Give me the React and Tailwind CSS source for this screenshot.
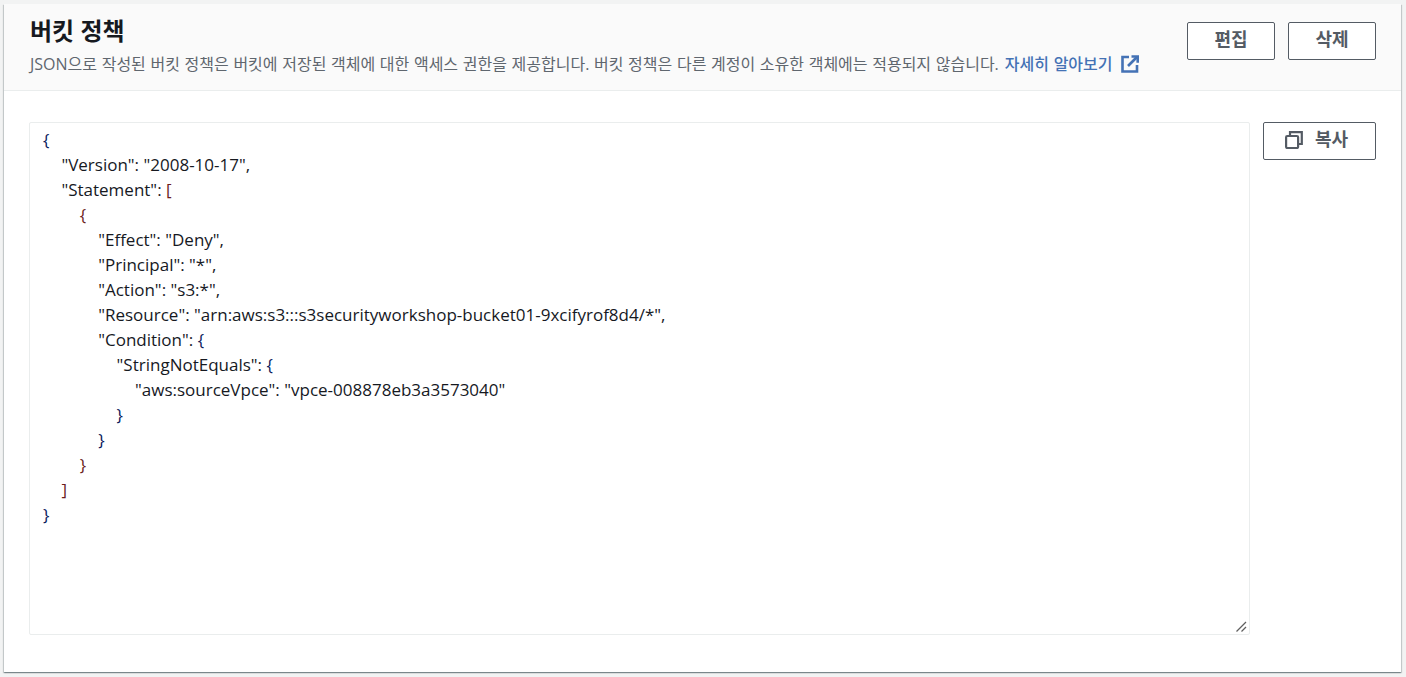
// App.jsx
import React from 'react';

const NAVY = 'text-[#0a1a5c]';
const MAROON = 'text-[#6b1d1d]';

const Line = ({ indent = 0, children }) => (
  <div className="h-[25px] whitespace-pre" style={{ paddingLeft: indent * 18.4 }}>
    {children}
  </div>
);

const Button = ({ className = '', children }) => (
  <button
    type="button"
    className={`h-[38px] flex items-center justify-center rounded-[2px] border border-[#545b64] bg-white text-[#545b64] text-[18px] font-bold pb-[3px] ${className}`}
  >
    {children}
  </button>
);

const App = () => {
  return (
    <div className="h-[677px] bg-[#f2f3f3] pt-1 pl-1 pr-[5px] pb-[5px] font-['Open_Sans','Noto_Sans_CJK_KR',sans-serif] overflow-hidden">
      <div className="h-full bg-white flex flex-col shadow-[0_1px_1px_0_rgba(0,28,36,0.3),1px_1px_1px_0_rgba(0,28,36,0.15),-1px_1px_1px_0_rgba(0,28,36,0.15)]">
        <div className="h-[87px] bg-[#fafafa] border-b border-[#eaeded] flex justify-between pl-[26px] pr-[25px]">
          <div>
            <h2 className="mt-[11px] text-[24px] leading-[32px] font-bold text-[#16191f]">버킷 정책</h2>
            <p className="mt-[7px] flex items-center text-[16px] leading-[20px] text-[#5f666e] whitespace-nowrap [word-spacing:0.5px]">
              JSON으로 작성된 버킷 정책은 버킷에 저장된 객체에 대한 액세스 권한을 제공합니다. 버킷 정책은 다른 계정이 소유한 객체에는 적용되지 않습니다.
              <a href="#" className="ml-[6px] font-medium text-[#4472b5] flex items-center">
                자세히 알아보기
                <svg className="ml-[8px] w-[18px] h-[18px]" viewBox="0 0 18 18" fill="none" stroke="#4472b5" strokeWidth="2.6">
                  <path d="M8 2H1.5v14.5H16V10" />
                  <path d="M7 11 16 2" />
                  <path d="M10.5 1.5h6.2v6.2" />
                </svg>
              </a>
            </p>
          </div>
          <div className="flex gap-[13px] pt-[18px]">
            <Button className="w-[88px]">편집</Button>
            <Button className="w-[88px]">삭제</Button>
          </div>
        </div>
        <div className="flex-1 flex items-start pt-[31px] pl-[25px] pr-[25px] gap-[13px]">
          <div className="relative w-[1221px] h-[513px] shrink-0 overflow-auto rounded-[2px] border border-[#eaeded] pl-[13px] pt-[4px] text-[17px] leading-[25px] text-[#16191f]">
            <Line><span className={NAVY}>{'{'}</span></Line>
            <Line indent={1}>"Version": "2008-10-17",</Line>
            <Line indent={1}>"Statement": <span className={MAROON}>[</span></Line>
            <Line indent={2}><span className={MAROON}>{'{'}</span></Line>
            <Line indent={3}>"Effect": "Deny",</Line>
            <Line indent={3}>"Principal": "*",</Line>
            <Line indent={3}>"Action": "s3:*",</Line>
            <Line indent={3}>"Resource": "arn:aws:s3:::s3securityworkshop-bucket01-9xcifyrof8d4/*",</Line>
            <Line indent={3}>"Condition": <span className={NAVY}>{'{'}</span></Line>
            <Line indent={4}>"StringNotEquals": <span className={NAVY}>{'{'}</span></Line>
            <Line indent={5}>"aws:sourceVpce": "vpce-008878eb3a3573040"</Line>
            <Line indent={4}><span className={NAVY}>{'}'}</span></Line>
            <Line indent={3}><span className={NAVY}>{'}'}</span></Line>
            <Line indent={2}><span className={MAROON}>{'}'}</span></Line>
            <Line indent={1}><span className={MAROON}>]</span></Line>
            <Line><span className={NAVY}>{'}'}</span></Line>
            {/* resize grip */}
            <svg className="absolute right-[2px] bottom-[2px] w-[11px] h-[11px]" viewBox="0 0 11 11" fill="none" stroke="#5f5f5f" strokeWidth="1.2">
              <path d="M0.5 10.5 10 1" />
              <path d="M5.5 10.5 10 6" />
            </svg>
          </div>
          <Button className="w-[113px] gap-[12px] pr-[6px]">
            <svg className="w-[18px] h-[18px]" viewBox="0 0 18 18" fill="none" stroke="#545b64" strokeWidth="2.2">
              <rect x="1.1" y="5" width="12" height="12" rx="1.2" />
              <path d="M5 4.5V1.2h11.8V13H13.5" />
            </svg>
            복사
          </Button>
        </div>
      </div>
    </div>
  );
};

export default App;
